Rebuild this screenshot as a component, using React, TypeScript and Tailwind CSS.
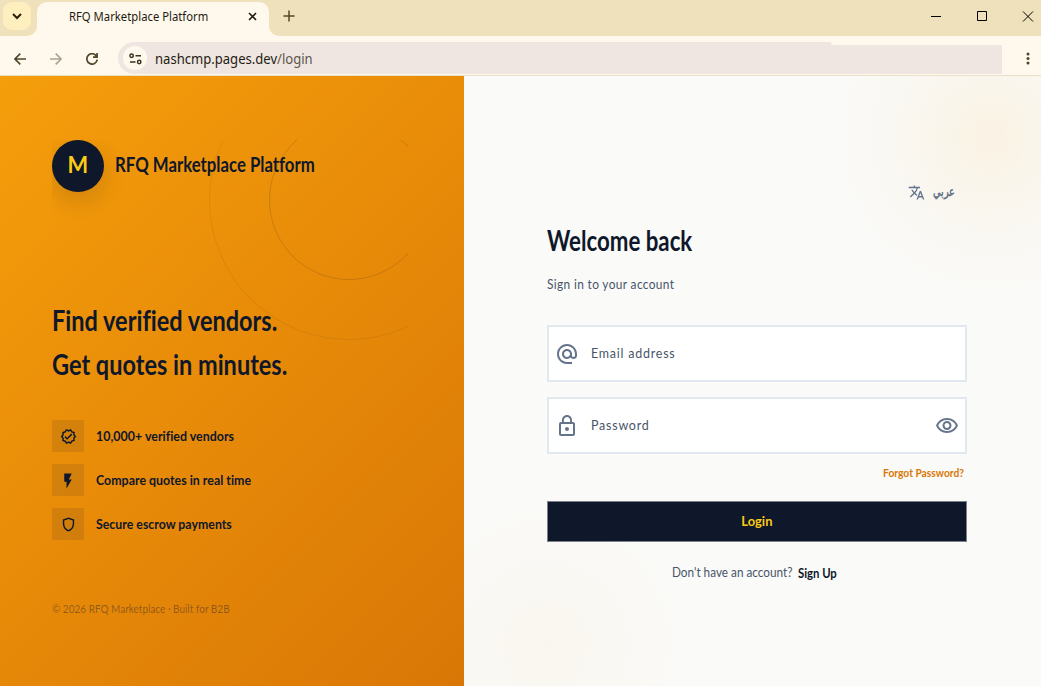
import type { ReactNode } from "react";
import {
  MdAlternateEmail,
  MdFlashOn,
  MdLockOutline,
  MdOutlineShield,
  MdOutlineVerified,
  MdOutlineVisibility,
  MdTranslate,
} from "react-icons/md";

function TitleBar() {
  return (
    <div className="flex h-9 shrink-0 bg-[#eee1bb]">
      <div className="flex w-[37px] items-start pl-[3px] pt-[2px]">
        <button className="flex size-7 items-center justify-center rounded-[9px] bg-[#ffefbf]">
          <svg width="10" height="7" viewBox="0 0 10 7" fill="none" stroke="#29220b" strokeWidth="2">
            <path d="M1 1l4 4 4-4" />
          </svg>
        </button>
      </div>
      <div className="relative mt-[2px] flex w-[232px] items-center rounded-t-[10px] bg-[#fff9ed] pl-8 text-[#1f1b13]">
        <svg className="absolute -left-[10px] bottom-0" width="10" height="10" fill="#fff9ed">
          <path d="M10 0v10H0A10 10 0 0 0 10 0z" />
        </svg>
        <svg className="absolute -right-[10px] bottom-0" width="10" height="10" fill="#fff9ed">
          <path d="M0 0v10h10A10 10 0 0 1 0 0z" />
        </svg>
        <span className="w-[179px] pb-[8px] whitespace-nowrap">
          <span className="inline-block origin-left scale-x-[0.94] text-[12px]">RFQ Marketplace Platform</span>
        </span>
        <svg className="mb-[6px]" width="9" height="9" viewBox="0 0 9 9" stroke="#1f1b13" strokeWidth="1.6">
          <path d="M1 1l7 7M8 1l-7 7" />
        </svg>
      </div>
      <svg className="mt-[10px] ml-[14px]" width="12" height="12" viewBox="0 0 12 12" stroke="#554a27" strokeWidth="1.5">
        <path d="M6 .5v11M.5 6h11" />
      </svg>
      <div className="ml-auto flex pt-[11px]">
        <svg width="110" height="11" viewBox="0 0 110 11" fill="none" stroke="#000" strokeWidth="1">
          <path d="M0 5.500h10M46.500.500h9v9h-9zM92 .500l10 10M102 .500l-10 10" />
        </svg>
      </div>
    </div>
  );
}

function Toolbar() {
  return (
    <div className="flex h-10 shrink-0 items-center border-b border-[#ebdfc8] bg-[#fff9ed]">
      <svg className="mt-[6px] ml-[14px]" width="12" height="12" viewBox="0 0 12 12" fill="none" stroke="#4d4528" strokeWidth="1.6">
        <path d="M12 6H1M6.300.6L.9 6l5.400 5.400" />
      </svg>
      <svg className="mt-[6px] ml-6" width="12" height="12" viewBox="0 0 12 12" fill="none" stroke="#aaa493" strokeWidth="1.6">
        <path d="M0 6h11M5.700.6L11.100 6l-5.400 5.400" />
      </svg>
      <svg className="mt-[6px] ml-6" width="12" height="12" viewBox="0 0 12 12" fill="none" stroke="#4d4528" strokeWidth="1.700">
        <path d="M10.600 3.400A5.200 5.200 0 1 0 11.200 6.700M11.100 0v4.200H7" />
      </svg>
      <div className="relative mt-[5px] ml-5 flex h-8 w-[884px] items-center rounded-l-full bg-[#efe6e1] pl-[5px]">
        <div className="absolute top-0 right-0 h-[3px] w-[171px] rounded-bl-[3px] bg-[#fff9ed]" />
        <div className="flex size-6 items-center justify-center rounded-full bg-[#fff9ed]">
          <svg className="mt-px" width="13" height="12" viewBox="0 0 13 12" fill="none" stroke="#3a3320" strokeWidth="1.500">
            <circle cx="2.600" cy="2.700" r="1.700" />
            <circle cx="10.200" cy="9" r="1.700" />
            <path d="M6.500 2.700H12M1 9h5.500" />
          </svg>
        </div>
        <span className="ml-2 inline-block origin-left scale-x-[0.933] text-[14px] whitespace-nowrap text-[#1f1b13]">
          nashcmp.pages.dev<span className="text-[#5d564b]">/login</span>
        </span>
      </div>
      <svg className="mt-[6px] ml-6" width="4" height="13" viewBox="0 0 4 13" fill="#4d4528">
        <circle cx="2" cy="2" r="1.500" />
        <circle cx="2" cy="6.500" r="1.500" />
        <circle cx="2" cy="11" r="1.500" />
      </svg>
    </div>
  );
}

function Feature({ icon, children }: { icon: ReactNode; children: ReactNode }) {
  return (
    <li className="flex h-8 items-center gap-3">
      <span className="flex size-8 items-center justify-center bg-[#0f172a]/10 pt-px">{icon}</span>
      <span className="pb-[2px]">{children}</span>
    </li>
  );
}

function BrandPanel() {
  return (
    <section className="w-[464px] shrink-0 bg-linear-[135deg,#f59e0b,#d97706] px-[52px] pt-16 font-['Lato','Noto_Sans',sans-serif] text-[#0f172a] [font-variant-ligatures:none]">
      <div className="relative flex h-[480px] w-[356px] flex-col overflow-hidden">
        <div className="absolute top-[-20px] left-[216.5px] size-[160px] rounded-full border border-[#0f172a]/15" />
        <div className="absolute top-[-80px] left-[156.5px] size-[280px] rounded-full border border-[#0f172a]/8" />
        <div className="flex items-center gap-[11px]">
          <div className="flex size-[52px] items-center justify-center rounded-full bg-[#0f172a] pb-1 text-[23px] font-bold text-[#facc15] shadow-[0_8px_24px_rgba(15,23,42,0.15)]">
            <span className="inline-block scale-x-[0.95]">M</span>
          </div>
          <div className="origin-left scale-x-[0.838] pb-[5px] text-[20px] font-bold whitespace-nowrap">
            RFQ Marketplace Platform
          </div>
        </div>
        <h1 className="mt-[106px] text-[28px] leading-[44px] font-bold whitespace-nowrap">
          <span className="block origin-left scale-x-[0.84]">Find verified vendors.</span>
          <span className="block origin-left scale-x-[0.84]">Get quotes in minutes.</span>
        </h1>
        <ul className="mt-[34px] flex flex-col gap-3 text-[14px] font-bold whitespace-nowrap">
          <Feature icon={<MdOutlineVerified size={17} />}>
            <span className="inline-block origin-left scale-x-[0.888]">10,000+ verified vendors</span>
          </Feature>
          <Feature icon={<MdFlashOn size={18} />}>
            <span className="inline-block origin-left scale-x-[0.886]">Compare quotes in real time</span>
          </Feature>
          <Feature icon={<MdOutlineShield size={17} />}>
            <span className="inline-block origin-left scale-x-[0.882]">Secure escrow payments</span>
          </Feature>
        </ul>
        <p className="mt-[61px] text-[11px] leading-4 whitespace-nowrap text-[#0f172a]/40">
          <span className="inline-block origin-left scale-x-[0.909]">© 2026 RFQ Marketplace · Built for B2B</span>
        </p>
      </div>
    </section>
  );
}

function LoginPanel() {
  return (
    <section className="min-w-0 flex-1 bg-[#fafaf8] bg-[radial-gradient(circle_at_527px_61px,rgba(245,158,11,0.09),rgba(245,158,11,0.03)_85px,transparent_160px),radial-gradient(circle_at_81px_569px,rgba(245,158,11,0.04),transparent_145px)] pl-[83px] font-['Lato','Noto_Sans',sans-serif] text-[#0f172a]">
      <div className="flex w-[420px] flex-col whitespace-nowrap">
        <button className="mt-[104px] mr-3 flex h-6 items-center gap-2 self-end text-[#64748b]">
          <MdTranslate size={17} />
          <span className="flex w-[22px] justify-end text-[13px] font-bold">
            <span className="inline-block origin-right scale-x-[0.74]">عربي</span>
          </span>
        </button>
        <h2 className="mt-[18px] origin-left scale-x-[0.795] text-[28px] leading-9 font-bold">Welcome back</h2>
        <p className="mt-[15px] h-[22px] text-[13px] leading-[22px] text-[#475569]">
          <span className="inline-block origin-left scale-x-[0.914] tracking-[0.4px]">Sign in to your account</span>
        </p>
        <label className="mt-[30px] flex h-[57px] items-center border-2 border-[#e2e8f0] bg-white pl-[6px]">
          <MdAlternateEmail size={24} className="text-[#64748b]" />
          <span className="ml-3 inline-block origin-left scale-x-[0.96] text-[13px] tracking-[0.8px] text-[#475569]">
            Email address
          </span>
        </label>
        <label className="mt-[15px] flex h-[57px] items-center border-2 border-[#e2e8f0] bg-white pl-[6px]">
          <MdLockOutline size={24} className="text-[#64748b]" />
          <span className="ml-3 inline-block origin-left scale-x-[0.96] text-[13px] tracking-[0.8px] text-[#475569]">
            Password
          </span>
          <MdOutlineVisibility size={24} className="mr-[6px] ml-auto text-[#64748b]" />
        </label>
        <a className="mt-[9px] mr-[3px] inline-block origin-right scale-x-[0.93] self-end text-[11px] leading-5 font-bold text-[#d97706]">
          Forgot Password?
        </a>
        <button className="mt-[18px] h-[41px] border border-[#7b808b] bg-[#0f172a] pb-[2px] text-[14px] font-bold text-[#facc15]">
          <span className="inline-block scale-x-[0.92]">Login</span>
        </button>
        <div className="mt-[18px] flex items-center pl-[125px] text-[13px] leading-[22px]">
          <span className="w-[126px] text-[#475569]">
            <span className="inline-block origin-left scale-x-[0.905]">Don't have an account?</span>
          </span>
          <span className="inline-block origin-left scale-x-[0.87] pt-[2px] font-bold">Sign Up</span>
        </div>
      </div>
    </section>
  );
}

export default function App() {
  return (
    <div className="flex h-[686px] w-[1041px] flex-col overflow-hidden font-['Noto_Sans',sans-serif]">
      <TitleBar />
      <Toolbar />
      <main className="flex min-h-0 flex-1">
        <BrandPanel />
        <LoginPanel />
      </main>
    </div>
  );
}
